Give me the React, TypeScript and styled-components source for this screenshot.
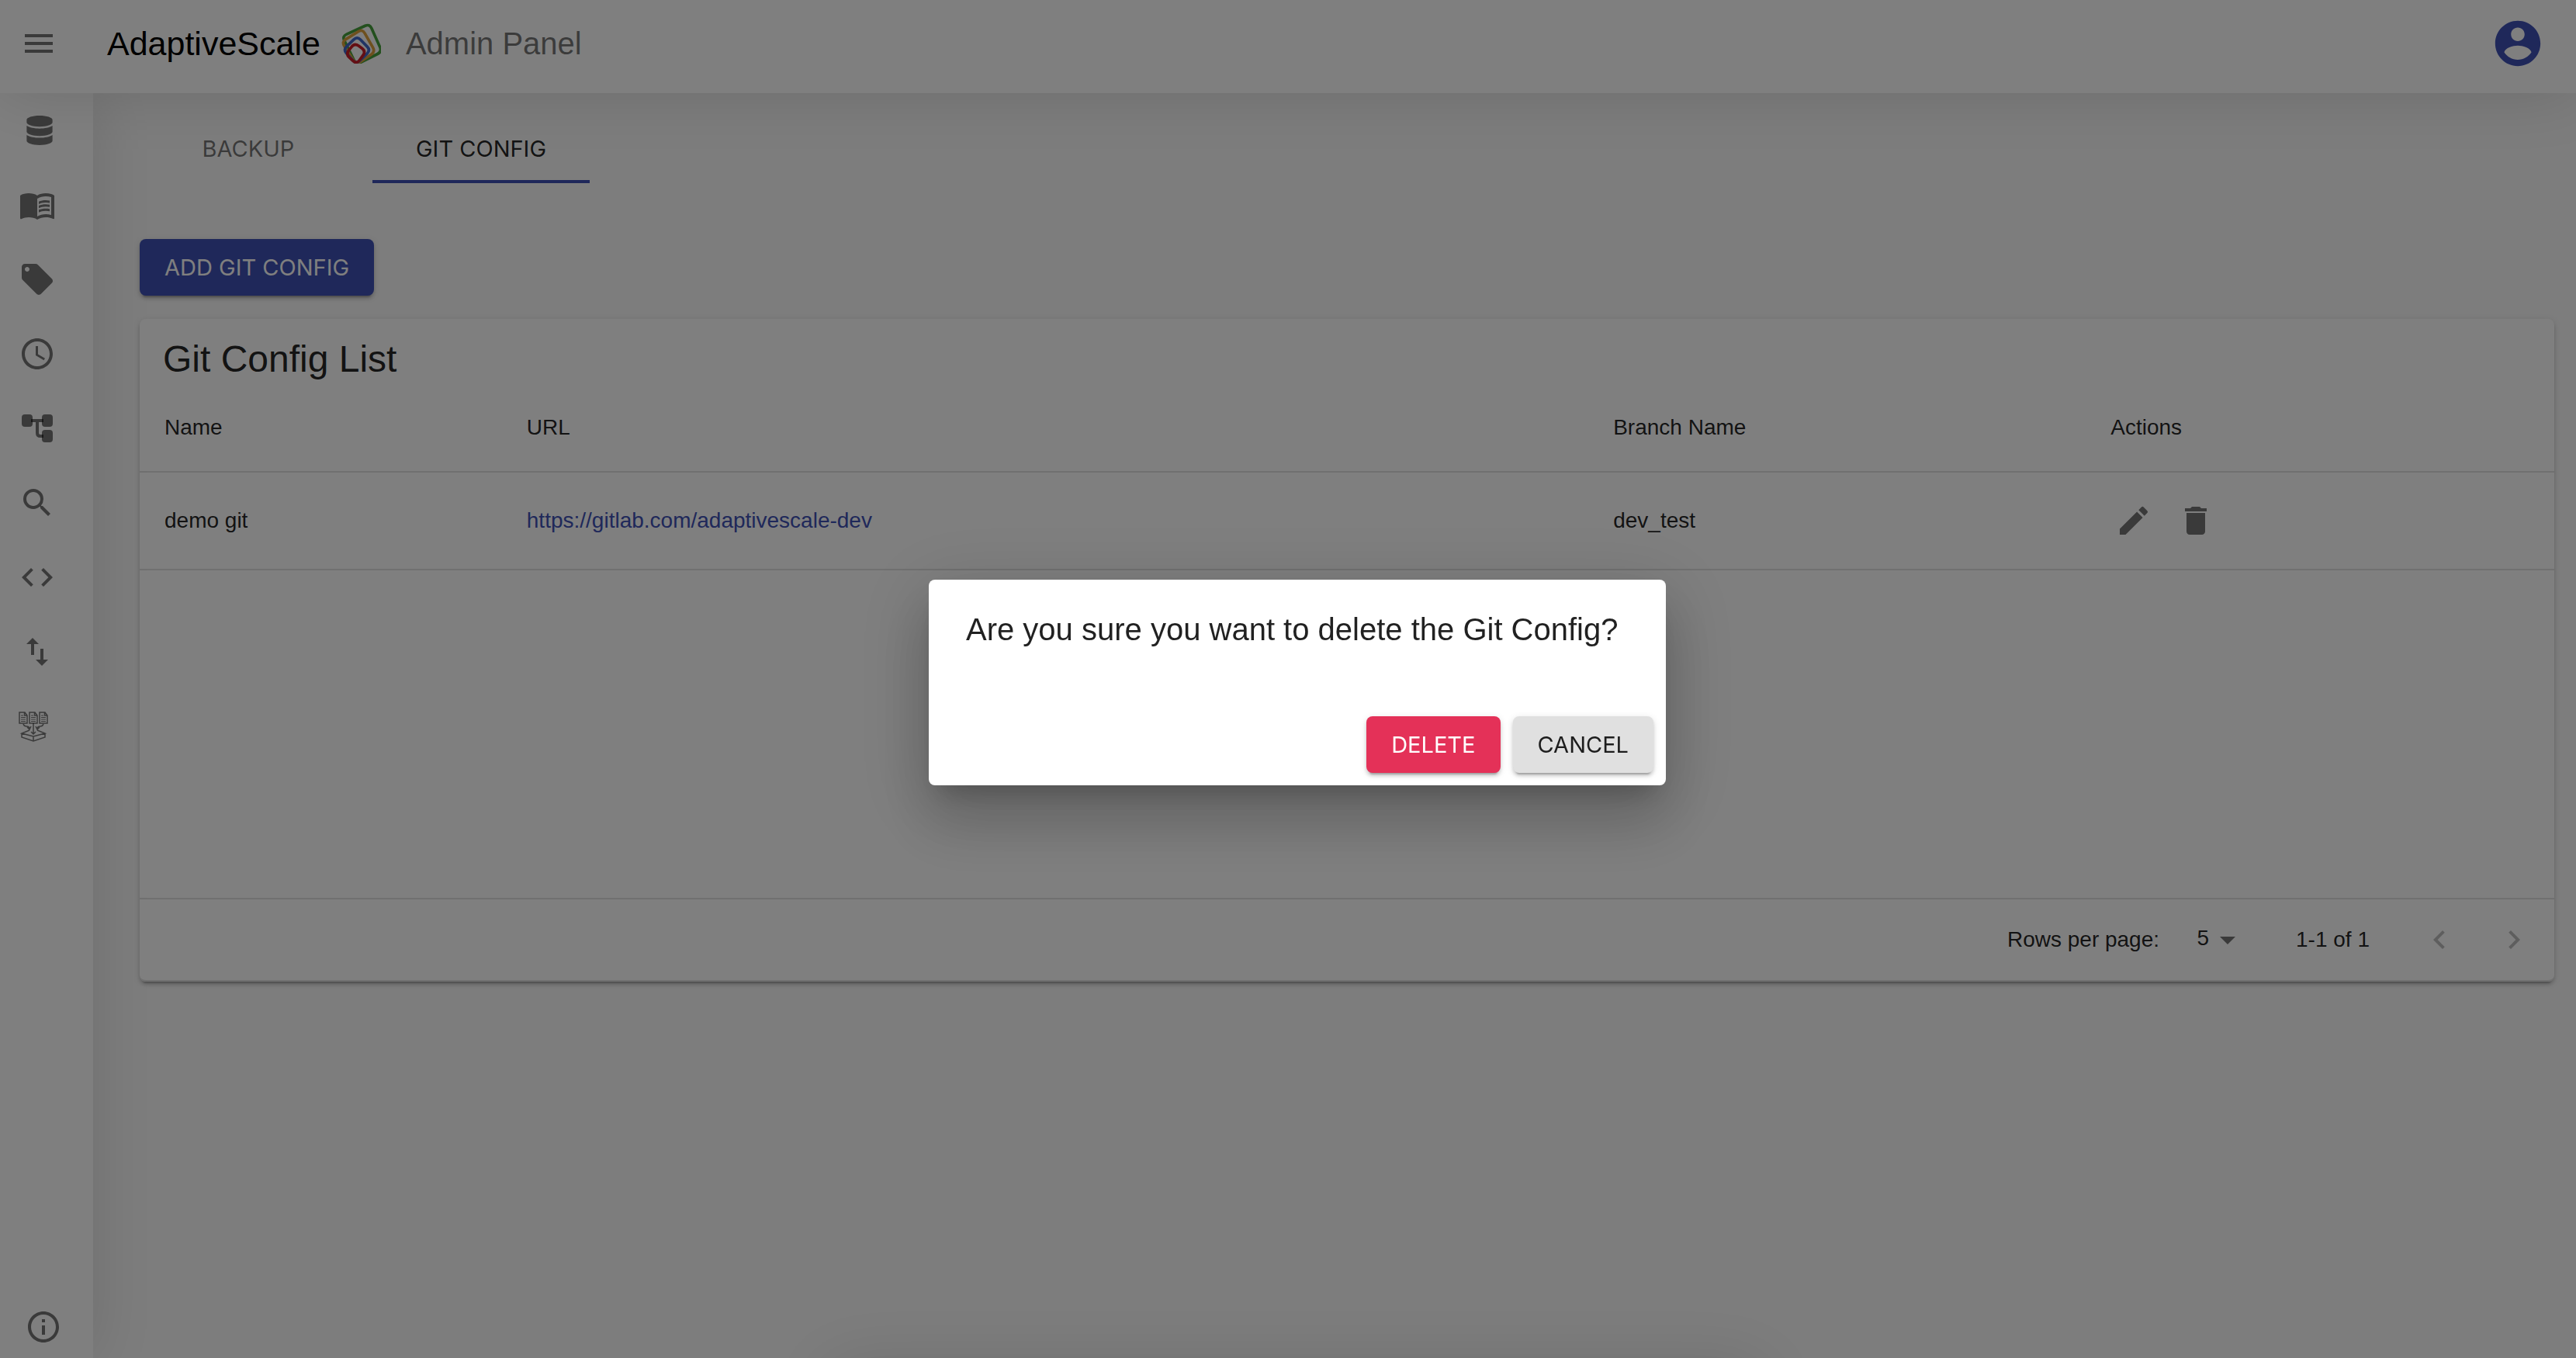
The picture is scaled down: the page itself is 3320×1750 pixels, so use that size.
import React from "react";
import styled, { createGlobalStyle } from "styled-components";
import { FaDatabase } from "react-icons/fa";
import {
  MdAccessTime,
  MdArrowDropDown,
  MdChevronLeft,
  MdChevronRight,
  MdCode,
  MdDelete,
  MdEdit,
  MdImportExport,
  MdInfoOutline,
  MdLocalOffer,
  MdMenu,
  MdMenuBook,
  MdSearch,
} from "react-icons/md";

const color = {
  primary: "#3f51b5",
  danger: "#e43158",
  neutral: "#e0e0e0",
  text: "rgba(0, 0, 0, 0.87)",
  muted: "rgba(0, 0, 0, 0.54)",
  disabled: "rgba(0, 0, 0, 0.26)",
  line: "#e0e0e0",
  paper: "#fff",
  page: "#fafafa",
};

const raised =
  "0 6px 2px -4px rgba(0, 0, 0, 0.2), 0 4px 4px 0 rgba(0, 0, 0, 0.14), 0 2px 10px 0 rgba(0, 0, 0, 0.12)";
const floating =
  "0 22px 30px -14px rgba(0, 0, 0, 0.2), 0 48px 76px 6px rgba(0, 0, 0, 0.14), 0 18px 92px 16px rgba(0, 0, 0, 0.12)";

const bodyFont = '"Liberation Sans", Arial, sans-serif';
const labelFont = 'Inter, "Liberation Sans", sans-serif';

const GlobalStyle = createGlobalStyle`
  *, *::before, *::after { box-sizing: border-box; }
  body {
    margin: 0;
    background: ${color.page};
    color: ${color.text};
    font: 28px/40px ${bodyFont};
  }
  button, select { font: inherit; color: inherit; }
  svg { display: block; flex: none; }
`;

const Shell = styled.div`
  min-height: 100vh;
  display: flex;
  flex-direction: column;
`;

const Header = styled.header`
  position: relative;
  z-index: 2;
  height: 120px;
  padding: 0 40px 8px 26px;
  display: flex;
  align-items: center;
  background: ${color.paper};
  box-shadow: 0 0 80px rgba(0, 0, 0, 0.14);
`;

const IconButton = styled.button<{ $size: number; $tone?: string }>`
  width: ${(p) => p.$size}px;
  height: ${(p) => p.$size}px;
  padding: 0;
  border: 0;
  background: none;
  display: flex;
  align-items: center;
  justify-content: center;
  color: ${(p) => p.$tone ?? color.muted};
  cursor: pointer;
`;

const Brand = styled.div`
  flex: 1;
  margin-left: 64px;
  display: flex;
  align-items: center;
  color: #000;
  font-size: 43px;
  line-height: 64px;
`;

const LogoMark = styled.svg`
  margin: 0 32px 0 26px;
`;

const Section = styled.span`
  color: ${color.muted};
  font-size: 40px;
`;

const Body = styled.div`
  flex: 1;
  display: flex;
`;

const Sidebar = styled.nav`
  position: relative;
  z-index: 1;
  width: 120px;
  flex: none;
  display: flex;
  flex-direction: column;
  background: ${color.paper};
  box-shadow: 0 0 80px rgba(0, 0, 0, 0.12);
`;

const NavLink = styled.a<{ $inset?: number; $last?: boolean }>`
  height: ${(p) => (p.$last ? 80 : 96)}px;
  margin-top: ${(p) => (p.$last ? "auto" : 0)};
  padding-left: ${(p) => p.$inset ?? 24}px;
  display: flex;
  align-items: center;
  color: ${color.muted};
`;

const Main = styled.main`
  flex: 1;
  min-width: 0;
  padding: 20px 28px 40px 60px;
`;

const Tabs = styled.div`
  display: flex;
  gap: 20px;
  margin-bottom: 72px;
`;

const Tab = styled.button<{ $active?: boolean }>`
  width: 280px;
  height: 96px;
  padding: 12px 0 0;
  border: 0;
  border-bottom: 4px solid ${(p) => (p.$active ? color.primary : "transparent")};
  background: none;
  font: 29px/48px ${labelFont};
  color: ${(p) => (p.$active ? color.text : color.muted)};
  text-transform: uppercase;
  cursor: pointer;
`;

const fills = {
  primary: [color.primary, "#fff"],
  danger: [color.danger, "#fff"],
  neutral: [color.neutral, color.text],
};

const Button = styled.button<{ $kind: keyof typeof fills }>`
  padding: 12px 32px;
  border: 0;
  border-radius: 8px;
  background: ${(p) => fills[p.$kind][0]};
  color: ${(p) => fills[p.$kind][1]};
  box-shadow: ${raised};
  font: 29px/49px ${labelFont};
  text-transform: uppercase;
  cursor: pointer;
`;

const Card = styled.section`
  margin-top: 30px;
  border-radius: 8px;
  background: ${color.paper};
  box-shadow: ${raised};
`;

const CardTitle = styled.h1`
  margin: 0;
  padding: 20px 30px 0;
  font-size: 48px;
  font-weight: 400;
  line-height: 64px;
`;

const Table = styled.table`
  width: 100%;
  table-layout: fixed;
  border-collapse: separate;
  border-spacing: 0;
`;

const HeadCell = styled.th<{ $width?: string }>`
  width: ${(p) => p.$width ?? "auto"};
  padding: 36px 32px;
  border-bottom: 2px solid ${color.line};
  font-weight: 400;
  text-align: left;
`;

const Cell = styled.td<{ $height?: number }>`
  height: ${(p) => p.$height ?? 126}px;
  padding: 0 32px;
  border-bottom: 2px solid ${color.line};
`;

const RepoLink = styled.a`
  color: ${color.primary};
  text-decoration: none;
`;

const Actions = styled.div`
  display: flex;
  gap: 20px;
`;

const Pagination = styled.div`
  min-height: 106px;
  padding-right: 4px;
  border-bottom: 2px solid ${color.line};
  border-radius: 0 0 8px 8px;
  display: flex;
  align-items: center;
  justify-content: flex-end;
`;

const SelectWrap = styled.div`
  position: relative;
  margin: 0 64px 0 32px;
  color: ${color.muted};
  svg {
    position: absolute;
    right: 0;
    top: 50%;
    margin-top: -24px;
    pointer-events: none;
  }
`;

const RowsSelect = styled.select`
  display: block;
  width: 80px;
  height: 48px;
  padding: 0 48px 4px 0;
  border: 0;
  appearance: none;
  background: none;
  color: ${color.text};
  text-align-last: right;
`;

const Range = styled.span`
  margin-right: 42px;
`;

const Backdrop = styled.div`
  position: fixed;
  inset: 0;
  z-index: 10;
  overflow: hidden;
  padding: 8px 0 0 24px;
  display: flex;
  align-items: center;
  justify-content: center;
  background: rgba(0, 0, 0, 0.5);
`;

const Dialog = styled.div`
  min-width: 950px;
  border-radius: 8px;
  background: ${color.paper};
  box-shadow: ${floating};
`;

const DialogTitle = styled.h2`
  margin: 0 0 32px;
  padding: 32px 48px;
  font-size: 40px;
  font-weight: 400;
  line-height: 64px;
`;

const DialogActions = styled.div`
  padding: 16px;
  display: flex;
  justify-content: flex-end;
  gap: 16px;
`;

const ParkedDrawer = styled.div`
  position: absolute;
  left: 50%;
  bottom: -206px;
  width: 1180px;
  height: 200px;
  margin-left: -580px;
  box-shadow: ${floating};
`;

type Point = [number, number];

/* Closed path through the points with every corner rounded off. */
function roundedPath(points: Point[], radius: number) {
  const n = points.length;
  const toward = (a: Point, b: Point): Point => {
    const d = Math.hypot(b[0] - a[0], b[1] - a[1]);
    return [a[0] + ((b[0] - a[0]) * radius) / d, a[1] + ((b[1] - a[1]) * radius) / d];
  };
  return (
    points
      .map((p, i) => {
        const from = toward(p, points[(i + n - 1) % n]);
        const to = toward(p, points[(i + 1) % n]);
        return `${i ? "L" : "M"}${from.join(" ")}Q${p.join(" ")} ${to.join(" ")}`;
      })
      .join("") + "Z"
  );
}

const logoRings: { stroke: string; points: Point[] }[] = [
  { stroke: "#46a03c", points: [[108, -2], [156, 106], [56, 156], [2, 46]] },
  { stroke: "#dca03c", points: [[80, 18], [130, 106], [56, 156], [0, 68]] },
  { stroke: "#4169c8", points: [[60, 46], [112, 100], [56, 154], [6, 98]] },
  { stroke: "#c81e28", points: [[50, 72], [94, 104], [58, 154], [16, 116]] },
];

const Logo = () => (
  <LogoMark width={52} height={52} viewBox="-4 -4 156 156" fill="none" aria-hidden="true">
    {logoRings.map((ring) => (
      <path key={ring.stroke} d={roundedPath(ring.points, 19)} stroke={ring.stroke} strokeWidth={11} />
    ))}
  </LogoMark>
);

const TreeIcon = () => (
  <svg width={48} height={48} viewBox="0 0 24 24" fill="currentColor" aria-hidden="true">
    <rect x="2" y="3" width="7" height="8" rx="2" />
    <rect x="15" y="3" width="7" height="8" rx="2" />
    <rect x="15" y="13" width="7" height="8" rx="2" />
    <path d="M8 7h8M12 7v8q0 2 2 2h2" fill="none" stroke="currentColor" strokeWidth="2" />
  </svg>
);

const FileSheet = ({ x }: { x: number }) => (
  <g transform={`translate(${x} 0)`}>
    <path d="M1 1h7l3 4v10H1zM7.500 1v4H11" strokeWidth="1.500" />
    <path d="M3 5h3M3 7.500h6M3 10h6M3 12.500h6" strokeWidth="1.200" />
  </g>
);

const IngestIcon = () => (
  <svg width={38} height={39} viewBox="0 0 38 39" fill="none" stroke="currentColor" aria-hidden="true">
    <FileSheet x={0} />
    <FileSheet x={13} />
    <FileSheet x={26} />
    <path d="M6 16q1 3 4 3q4 0 4 3M11 20l3 3 2-4M32 16q-1 3-4 3q-4 0-4 3M27 20l-3 3-2-4M19 15v13M16 26l3 3 3-3" strokeWidth="1.500" />
    <path d="M14 24L4 28l15 4 15-4-10-4M4 28v5l15 5 15-5v-5M19 32v6" strokeWidth="1.500" />
  </svg>
);

const AccountIcon = () => (
  <svg width={70} height={70} viewBox="0 0 24 24" fill="currentColor" aria-hidden="true">
    <path d="M12 2C6.480 2 2 6.480 2 12s4.480 10 10 10 10-4.480 10-10S17.520 2 12 2zm0 3c1.660 0 3 1.340 3 3s-1.340 3-3 3-3-1.340-3-3 1.340-3 3-3zm0 14.200c-2.500 0-4.710-1.280-6-3.220.030-1.990 4-3.080 6-3.080 1.990 0 5.970 1.090 6 3.080-1.290 1.940-3.500 3.220-6 3.220z" />
  </svg>
);

const navItems = [
  { label: "Datasources", inset: 32, icon: <FaDatabase size={38} /> },
  { label: "Catalog", icon: <MdMenuBook size={48} /> },
  { label: "Tags", icon: <MdLocalOffer size={48} /> },
  { label: "Schedule", icon: <MdAccessTime size={48} /> },
  { label: "Lineage", icon: <TreeIcon /> },
  { label: "Search", icon: <MdSearch size={48} /> },
  { label: "Code", icon: <MdCode size={48} /> },
  { label: "Import and export", icon: <MdImportExport size={48} /> },
  { label: "Ingestion", inset: 24, icon: <IngestIcon /> },
];

const configs = [
  { name: "demo git", url: "https://gitlab.com/adaptivescale-dev", branch: "dev_test" },
];

export default function App() {
  return (
    <>
      <GlobalStyle />
      <Shell>
        <Header>
          <IconButton $size={48} aria-label="Menu">
            <MdMenu size={48} />
          </IconButton>
          <Brand>
            AdaptiveScale
            <Logo />
            <Section>Admin Panel</Section>
          </Brand>
          <IconButton $size={70} $tone={color.primary} aria-label="Account">
            <AccountIcon />
          </IconButton>
        </Header>
        <Body>
          <Sidebar>
            {navItems.map((item) => (
              <NavLink key={item.label} href="#" $inset={item.inset} aria-label={item.label}>
                {item.icon}
              </NavLink>
            ))}
            <NavLink href="#" $inset={32} $last aria-label="About">
              <MdInfoOutline size={48} />
            </NavLink>
          </Sidebar>
          <Main>
            <Tabs role="tablist">
              <Tab role="tab" aria-selected={false}>Backup</Tab>
              <Tab role="tab" aria-selected $active>Git Config</Tab>
            </Tabs>
            <Button $kind="primary">Add Git Config</Button>
            <Card>
              <CardTitle>Git Config List</CardTitle>
              <Table>
                <thead>
                  <tr>
                    <HeadCell $width="15%">Name</HeadCell>
                    <HeadCell $width="45%">URL</HeadCell>
                    <HeadCell $width="20.6%">Branch Name</HeadCell>
                    <HeadCell>Actions</HeadCell>
                  </tr>
                </thead>
                <tbody>
                  {configs.map((config) => (
                    <tr key={config.name}>
                      <Cell>{config.name}</Cell>
                      <Cell>
                        <RepoLink href="#">{config.url}</RepoLink>
                      </Cell>
                      <Cell>{config.branch}</Cell>
                      <Cell>
                        <Actions>
                          <IconButton $size={60} aria-label="Edit">
                            <MdEdit size={48} />
                          </IconButton>
                          <IconButton $size={60} aria-label="Delete">
                            <MdDelete size={48} />
                          </IconButton>
                        </Actions>
                      </Cell>
                    </tr>
                  ))}
                  <tr>
                    <Cell colSpan={4} $height={424} />
                  </tr>
                </tbody>
              </Table>
              <Pagination>
                <label htmlFor="rows">Rows per page:</label>
                <SelectWrap>
                  <RowsSelect id="rows" defaultValue="5">
                    <option>5</option>
                    <option>10</option>
                    <option>25</option>
                  </RowsSelect>
                  <MdArrowDropDown size={48} />
                </SelectWrap>
                <Range>1-1 of 1</Range>
                <IconButton $size={96} $tone={color.disabled} disabled aria-label="Previous page">
                  <MdChevronLeft size={48} />
                </IconButton>
                <IconButton $size={96} $tone={color.disabled} disabled aria-label="Next page">
                  <MdChevronRight size={48} />
                </IconButton>
              </Pagination>
            </Card>
          </Main>
        </Body>
      </Shell>
      <Backdrop>
        <Dialog role="dialog" aria-modal="true" aria-labelledby="confirm-title">
          <DialogTitle id="confirm-title">Are you sure you want to delete the Git Config?</DialogTitle>
          <DialogActions>
            <Button $kind="danger">Delete</Button>
            <Button $kind="neutral">Cancel</Button>
          </DialogActions>
        </Dialog>
        <ParkedDrawer aria-hidden="true" />
      </Backdrop>
    </>
  );
}
